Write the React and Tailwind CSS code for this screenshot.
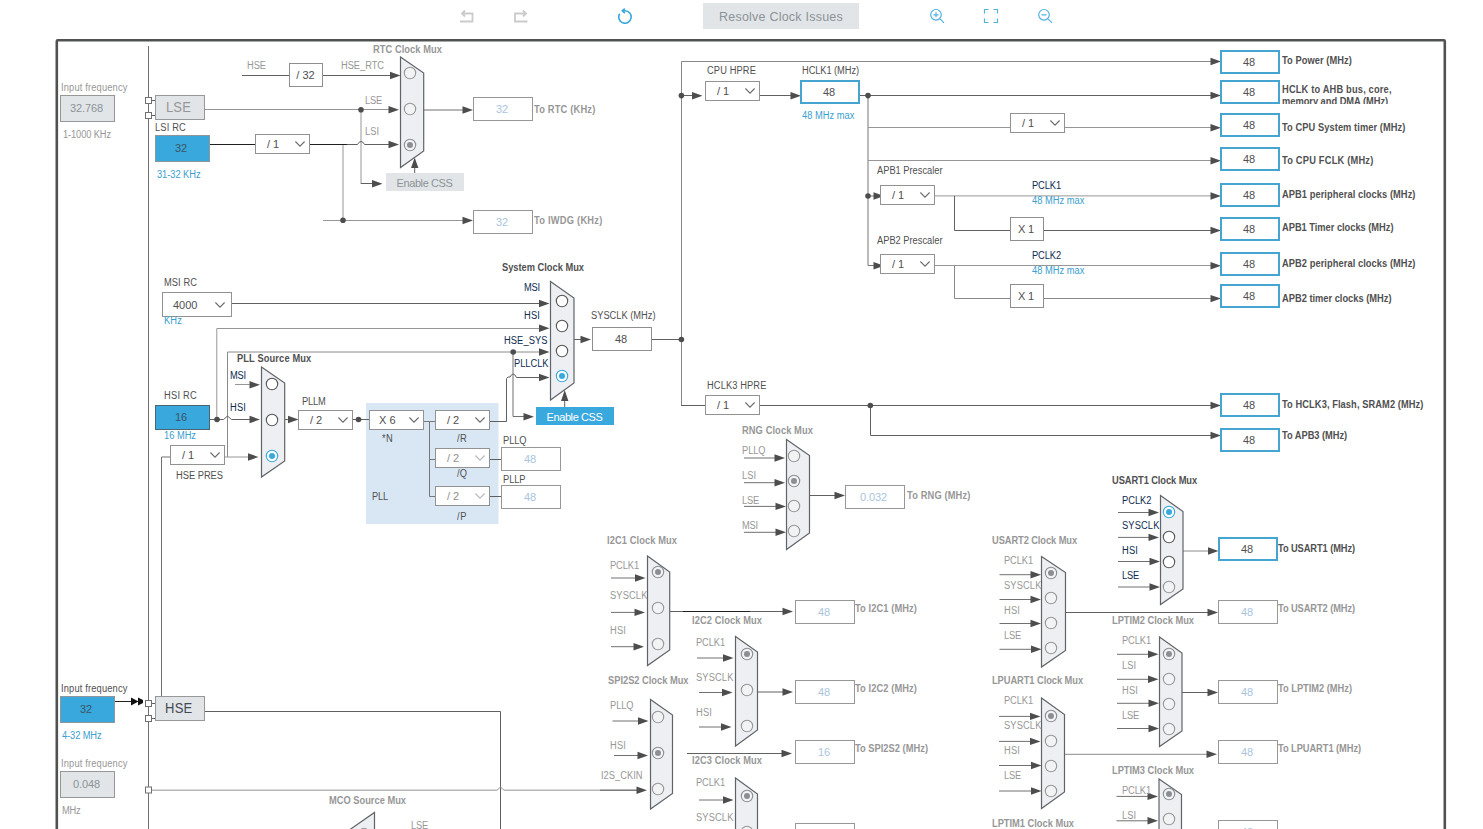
import React from "react";

const TOP = 32;
const FONT = '"Liberation Sans", Arial, sans-serif';
// Labels are set slightly condensed; the tracking below allows for it.
const CONDENSE = 0.93;

const pen = document.createElement("canvas").getContext("2d");
// Letter spacing that makes a label exactly `width` pixels wide.
function tracking(text, size, bold, width) {
  pen.font = `${bold ? "bold " : ""}${size}px ${FONT}`;
  return (width - pen.measureText(text).width) / text.length;
}

const TONES = {
  dark: "text-[#505050]",
  gray: "text-[#979797]",
  navy: "text-[#0d2c52]",
  blue: "text-[#3aa0cf]",
  slate: "text-[#454b54]",
};

function Label({ text, x, y, w, tone = "dark", bold, size = 10 }) {
  return (
    <span
      className={`absolute h-4 origin-left scale-x-[0.93] whitespace-pre leading-4 ${bold ? "font-bold" : ""} ${TONES[tone]}`}
      style={{ left: x, top: Math.round(y - 8 - TOP), fontSize: size, letterSpacing: tracking(text, size, bold, w / CONDENSE) }}
    >
      {text}
    </span>
  );
}

const BOX = {
  plain: "border border-[#8e8e8e] bg-white text-[#505050]",
  active: "border-2 border-[#45a5d0] bg-white text-[#505050]",
  off: "border border-[#979797] bg-white text-[#a9c4dd]",
  input: "border border-[#8f9598] bg-[#39a8dd] text-[#3b5563]",
  inputDark: "border border-[#4a6470] bg-[#39a8dd] text-[#3b5563]",
  muted: "border border-[#979797] bg-[#e1e5e8] text-[#8d9397]",
};

function Box({ x, y, w = 60, h = 24, text, kind = "plain", pr = 5, tw }) {
  const width = tw || text.length * 6;
  return (
    <div
      className={`absolute flex items-center justify-center whitespace-pre text-[11px] ${BOX[kind]}`}
      style={{ left: x, top: y - TOP, width: w, height: h, paddingRight: pr }}
    >
      <span style={{ letterSpacing: tracking(text, 11, false, width) }}>{text}</span>
    </div>
  );
}

function Combo({ x, y, w = 55, h = 20, text, off, pl = 11 }) {
  return (
    <div
      className={`absolute flex items-center justify-between whitespace-pre border border-[#929292] bg-white pr-1 text-[11px] ${off ? "text-[#8f8f8f]" : "text-[#505050]"}`}
      style={{ left: x, top: y - TOP, width: w, height: h, paddingLeft: pl }}
    >
      <span className="pt-px">{text}</span>
      <svg className={`h-[6px] w-[10px] ${h > 20 ? "mr-[2px]" : ""}`} viewBox="0 0 10 6" fill="none" stroke={off ? "#b5b9bd" : "#6a6a6a"} strokeWidth="1.1">
        <path d="M.4 .5L5 5.1L9.6 .5" />
      </svg>
    </div>
  );
}

const G = "#969696";
const D = "#606060";
const K = "#1f1f1f";

// [path, colour]
const WIRES = [
  ["M148.500 46V829", "#707070"],
  ["M151 100.500H155M151 115.500H155M151 703.500H155M151 718.500H155", D],
  ["M242 75.500H289M323 75.500H392", D],
  ["M205 109.500H392M361 109.500V184M343 144V220M323 220.500H465", G],
  ["M361 183.500H374", D],
  ["M210 144.500H255M310 144.500H347", K],
  ["M347 144.500H357.500Q359 141.500 361 141.500Q363 141.500 364.500 144.500H392", D],
  ["M424 110H465", "#707070"],
  ["M414.700 173V166", D],
  ["M232 303.500H541", D],
  ["M216.800 419V328.500H541", G],
  ["M227.500 457V352H541", "#8a8a8a"],
  ["M235 384.500H252", G],
  ["M210 419.500H223.500L227.500 416L231.500 419.500H252", D],
  ["M225 457H250", G],
  ["M170 457H161.500V696", "#707070"],
  ["M285 419.500H291M353 419.500H369", D],
  ["M424 421.500H435M429.500 421.500V496.500H435M429.500 459.500H435", "#777"],
  ["M490 421.500H506.500V378.500L508 377H510Q511.500 374 513 374Q515 374 516.500 377.500H541", D],
  ["M490 459.500H501M490 496.500H501", D],
  ["M513 352V416.500H526", "#707070"],
  ["M574 339.500H583M652 339.500H681", D],
  ["M564.700 407V400", D],
  ["M681.500 405V61.500H1213", "#888"],
  ["M681 95.500H693M760 95.500H792M860 95.500H1213", D],
  ["M868 95.500V265.500H874M868 196H874", "#777"],
  ["M868 127.500H1010M1065 127.500H1213M868 160.500H1213", G],
  ["M935 195.900H1213M935 265.500H1213", G],
  ["M954.500 196V230.500H1010M1044 230.500H1213", D],
  ["M954.500 265.500V298.500H1010M1044 298.500H1213", "#8a8a8a"],
  ["M681 405.500H705M760 405.500H1213", D],
  ["M870.500 405.500V435.500H1213", D],
  ["M810 495.500H837M1065 612.500H1210M1182 692.500H1210", D],
  ["M1183 551H1210M1065 754.300H1209", "#8a8a8a"],
  ["M670 611.500H785M758 692H785", D],
  ["M683 611.500H750", K],
  ["M687 753.500H784", D],
  ["M205 711.500H500.500V829", D],
  ["M151 790.200H497L500.500 787L504 790.200H640", G],
  ["M600 790.200H640", D],
  ["M115 701.500H131", K],
];

// Arrow heads pointing right: [tip x, y]
const HEADS = [
  [400.500, 75.500], [399, 109.700], [382.500, 183.800], [399, 144.500], [473, 220.500], [473, 110],
  [549.500, 303.500], [549.500, 328.300], [549.500, 352], [549.500, 377.500], [260, 384.800], [260, 419.500],
  [258.500, 457], [298.500, 419.500], [534, 416.700], [591, 339.500],
  [1221, 61.500], [702.500, 95.700], [801, 95.700], [1221, 95.500], [1221, 127.800], [1221, 160.700],
  [1221, 196], [1221, 230.500], [1221, 265.800], [1221, 298.600], [1221, 405.500], [1221, 435.500],
  [884, 196], [884, 265.800],
  [845, 495.500], [1218.500, 551], [1218, 612.500], [1218, 692.500], [1217, 754.300],
  [793, 611.500], [793, 692], [792, 753.500], [647, 790.200],
];

const DOTS = [
  [361, 109.800], [343, 220.200], [217, 419.500], [358.500, 419.500], [513.200, 352], [681.400, 339.500],
  [681.400, 95.600], [868, 95.600], [868, 196], [870.300, 405.500],
];

const PORTS = [100.500, 115.500, 703.500, 718.500, 790];

// Selectors: geometry, radio centre x, radios [y, state], inputs [from x, tip x, y]
const MUXES = [
  { l: 400.500, r: 423.700, t: 57, rt: 73, rb: 151, b: 167.500, cx: 410, radios: [[73, "off"], [109, "off"], [145, "offOn"]], ins: [] },
  { l: 550.500, r: 574, t: 281.500, rt: 298, rb: 383, b: 400, cx: 562, radios: [[301, "free"], [326, "free"], [351, "free"], [376, "on"]], ins: [] },
  { l: 261.500, r: 284.700, t: 367, rt: 383, rb: 461, b: 477, cx: 272, radios: [[384, "free"], [420, "free"], [456, "on"]], ins: [] },
  { l: 786.500, r: 809.500, t: 439.500, rt: 455.500, rb: 533, b: 549.500, cx: 794, radios: [[456, "off"], [481, "offOn"], [506, "off"], [531, "off"]], ins: [[744, 785, 458], [744, 785, 482.700], [744, 786, 506.400], [744, 786, 532.300]] },
  { l: 1160.500, r: 1183, t: 495.500, rt: 511.500, rb: 589, b: 604.500, cx: 1169, radios: [[512, "on"], [537, "free"], [562, "free"], [587, "off"]], ins: [[1118, 1159, 512.500], [1118, 1159, 537.400], [1118, 1160, 561.500], [1118, 1160, 587]] },
  { l: 1041.500, r: 1065.500, t: 556.500, rt: 572.500, rb: 650.500, b: 667, cx: 1051, radios: [[573, "offOn"], [598, "off"], [623, "off"], [648, "off"]], ins: [[999.500, 1041, 574.700], [999.500, 1041, 599.500], [999.500, 1041, 623.500], [999.500, 1041.500, 649.300]] },
  { l: 1159.500, r: 1182, t: 637, rt: 653, rb: 731, b: 746.500, cx: 1169, radios: [[654, "offOn"], [679, "off"], [704, "off"], [729, "off"]], ins: [[1117, 1158.500, 654.300], [1117, 1158.500, 679.300], [1117, 1159, 703.300], [1117, 1159, 728.500]] },
  { l: 1041.500, r: 1064.500, t: 698, rt: 714.500, rb: 792, b: 808.500, cx: 1051, radios: [[716, "offOn"], [741, "off"], [766, "off"], [791, "off"]], ins: [[999, 1040.500, 716.400], [999, 1040.500, 741.400], [999, 1041.500, 765.500], [999, 1041.500, 791]] },
  { l: 1159, r: 1181.500, t: 779, rt: 794.500, rb: 873, b: 889, cx: 1169, radios: [[794, "offOn"], [819, "off"]], ins: [[1116.500, 1158, 796.400], [1116.500, 1158, 820.800]] },
  { l: 647.500, r: 669.700, t: 556, rt: 572, rb: 650, b: 665.500, cx: 658, radios: [[572, "offOn"], [608, "off"], [644, "off"]], ins: [[611, 645.500, 578], [611, 645, 612.400], [611, 644, 646.700]] },
  { l: 735.500, r: 757.500, t: 636.500, rt: 652, rb: 730, b: 746, cx: 747, radios: [[654, "offOn"], [690, "off"], [726, "off"]], ins: [[697, 733.500, 658], [699, 732.500, 692.500], [699, 731.500, 727]] },
  { l: 650.500, r: 672.500, t: 699.500, rt: 715, rb: 793.500, b: 809, cx: 658, radios: [[717, "off"], [753, "offOn"], [789, "off"]], ins: [[612.500, 648.500, 721], [614, 648, 755.500]] },
  { l: 735.500, r: 757.500, t: 778, rt: 794, rb: 872, b: 888, cx: 747, radios: [[796, "offOn"], [832, "off"]], ins: [[699, 733.500, 800]] },
];

function Head({ x, y }) {
  return <path d={`M${x - 10.5} ${y - 3.7}L${x} ${y}L${x - 10.5} ${y + 3.7}Z`} fill="#4d4d4d" />;
}

function Radio({ x, y, state }) {
  const stroke = { off: "#979797", offOn: "#8b8f92", free: "#555", on: "#39a8dd" }[state];
  return (
    <g>
      <circle cx={x} cy={y} r="5.7" fill={state === "free" || state === "on" ? "#fff" : "#f1f3f5"} stroke={stroke} strokeWidth="1.1" />
      {(state === "on" || state === "offOn") && <circle cx={x} cy={y} r="3" fill={stroke} />}
    </g>
  );
}

function Mux({ l, r, t, rt, rb, b, cx, radios, ins }) {
  return (
    <g>
      {ins.map(([from, tip, y]) => (
        <g key={y}>
          <path d={`M${from} ${y}H${tip - 9}`} stroke="#707070" />
          <Head x={tip} y={y} />
        </g>
      ))}
      <path d={`M${l} ${t}L${r} ${rt}V${rb}L${l} ${b}Z`} fill="#edeff2" stroke="#606468" strokeWidth="1.2" />
      {radios.map(([y, state]) => (
        <Radio key={y} x={cx} y={y} state={state} />
      ))}
    </g>
  );
}

// [text, x, y, width, tone, bold]
const LABELS = [
  ["Input frequency", 60.500, 88, 66.500, "gray"], ["1-1000 KHz", 62.500, 134.700, 48, "gray"],
  ["LSI RC", 155, 128, 31, "dark"], ["31-32 KHz", 157, 174.700, 43.500, "blue"],
  ["HSE", 247, 65.700, 19, "gray"], ["HSE_RTC", 341, 65.700, 43, "gray"],
  ["RTC Clock Mux", 373, 49.700, 69, "gray", 1],
  ["LSE", 365, 100.700, 17, "gray"], ["LSI", 365, 131.700, 14, "gray"],
  ["To RTC (KHz)", 534, 109.700, 61.500, "gray", 1], ["To IWDG (KHz)", 534, 220.700, 68.500, "gray", 1],
  ["MSI RC", 164, 282.700, 33, "dark"], ["KHz", 164, 321, 18, "blue"],
  ["HSI RC", 164, 395.700, 33, "dark"], ["16 MHz", 164, 435.700, 32, "blue"], ["HSE PRES", 176, 475.700, 47, "dark"],
  ["PLL Source Mux", 237, 358.700, 74.500, "dark", 1], ["MSI", 230, 375.700, 16, "navy"], ["HSI", 230, 407.700, 16, "navy"],
  ["PLLM", 302, 401.700, 23.500, "dark"],
  ["System Clock Mux", 501.500, 267.700, 82, "dark", 1],
  ["MSI", 524, 287.700, 16, "navy"], ["HSI", 524, 315.700, 16, "navy"], ["HSE_SYS", 504, 340.700, 43.500, "navy"], ["PLLCLK", 514, 363.700, 34.500, "navy"],
  ["SYSCLK (MHz)", 591, 315.700, 64.500, "dark"],
  ["*N", 382, 439, 11, "dark"], ["/R", 457, 439, 10, "dark"], ["/Q", 457, 474, 10, "dark"], ["/P", 457, 516.700, 10, "dark"], ["PLL", 372, 496.700, 16, "dark"],
  ["PLLQ", 503, 440.700, 23.500, "dark"], ["PLLP", 503, 479.700, 22.500, "dark"],
  ["CPU HPRE", 707, 70.700, 49, "dark"], ["HCLK1 (MHz)", 802, 70.700, 57, "dark"], ["48 MHz max", 802, 115.700, 52.500, "blue"],
  ["APB1 Prescaler", 877, 170.700, 65.500, "dark"], ["APB2 Prescaler", 877, 240.700, 65.500, "dark"],
  ["PCLK1", 1032, 185.700, 29, "navy"], ["48 MHz max", 1032, 200.700, 52.500, "blue"],
  ["PCLK2", 1032, 255.700, 29, "navy"], ["48 MHz max", 1032, 270.700, 52.500, "blue"],
  ["To Power (MHz)", 1282, 60.700, 70, "dark", 1], ["To CPU System timer (MHz)", 1282, 127.700, 123.500, "dark", 1],
  ["To CPU FCLK (MHz)", 1282, 160.700, 91.500, "dark", 1], ["APB1 peripheral clocks (MHz)", 1282, 194.700, 133.500, "dark", 1],
  ["APB1 Timer clocks (MHz)", 1282, 227.700, 111.500, "dark", 1], ["APB2 peripheral clocks (MHz)", 1282, 263.700, 133.500, "dark", 1],
  ["APB2 timer clocks (MHz)", 1282, 298.700, 109.500, "dark", 1],
  ["HCLK3 HPRE", 707, 385.700, 59.500, "dark"],
  ["To HCLK3, Flash, SRAM2 (MHz)", 1282, 404.700, 141.500, "dark", 1], ["To APB3 (MHz)", 1282, 435.700, 65.500, "dark", 1],
  ["RNG Clock Mux", 742, 430.700, 71, "gray", 1], ["PLLQ", 742, 450.700, 23.500, "gray"], ["LSI", 742, 475.700, 14, "gray"], ["LSE", 742, 500.700, 17, "gray"], ["MSI", 742, 525.700, 16, "gray"],
  ["To RNG (MHz)", 907, 495.700, 63.500, "gray", 1],
  ["USART1 Clock Mux", 1112, 480.700, 85, "dark", 1], ["PCLK2", 1122, 500.700, 29.500, "navy"], ["SYSCLK", 1122, 525.700, 37.500, "navy"], ["HSI", 1122, 550.700, 16, "navy"], ["LSE", 1122, 575.700, 17, "navy"],
  ["To USART1 (MHz)", 1277.500, 548.700, 77, "dark", 1],
  ["USART2 Clock Mux", 992, 540.700, 85, "gray", 1], ["PCLK1", 1004, 560.700, 29, "gray"], ["SYSCLK", 1004, 585.700, 37.500, "gray"], ["HSI", 1004, 610.700, 16, "gray"], ["LSE", 1004, 635.700, 17, "gray"],
  ["To USART2 (MHz)", 1277.500, 608.700, 77, "gray", 1],
  ["LPTIM2 Clock Mux", 1112, 620.700, 82, "gray", 1], ["PCLK1", 1122, 640.700, 29, "gray"], ["LSI", 1122, 665.700, 14, "gray"], ["HSI", 1122, 690.700, 16, "gray"], ["LSE", 1122, 715.700, 17, "gray"],
  ["To LPTIM2 (MHz)", 1277.500, 688.700, 74, "gray", 1],
  ["LPUART1 Clock Mux", 992, 680.700, 91, "gray", 1], ["PCLK1", 1004, 700.700, 29, "gray"], ["SYSCLK", 1004, 725.700, 37.500, "gray"], ["HSI", 1004, 750.700, 16, "gray"], ["LSE", 1004, 775.700, 17, "gray"],
  ["To LPUART1 (MHz)", 1277.500, 748.700, 83, "gray", 1],
  ["LPTIM3 Clock Mux", 1112, 770.700, 82, "gray", 1], ["PCLK1", 1122, 790.700, 29, "gray"], ["LSI", 1122, 815.700, 14, "gray"],
  ["LPTIM1 Clock Mux", 992, 823.700, 82, "gray", 1],
  ["I2C1 Clock Mux", 607, 540.700, 70, "gray", 1], ["PCLK1", 610, 565.700, 29, "gray"], ["SYSCLK", 610, 595.700, 37.500, "gray"], ["HSI", 610, 630.700, 16, "gray"],
  ["To I2C1 (MHz)", 855, 608.700, 62, "gray", 1],
  ["I2C2 Clock Mux", 692, 620.700, 70, "gray", 1], ["PCLK1", 696, 642.700, 29, "gray"], ["SYSCLK", 696, 677.700, 37.500, "gray"], ["HSI", 696, 712.700, 16, "gray"],
  ["To I2C2 (MHz)", 855, 688.700, 62, "gray", 1],
  ["SPI2S2 Clock Mux", 607.500, 680.700, 80.500, "gray", 1], ["PLLQ", 610, 705.700, 23.500, "gray"], ["HSI", 610, 745.700, 16, "gray"], ["I2S_CKIN", 600.500, 775.700, 41.500, "gray"],
  ["To SPI2S2 (MHz)", 855, 748.700, 73, "gray", 1],
  ["I2C3 Clock Mux", 692, 760.700, 70, "gray", 1], ["PCLK1", 696, 782.700, 29, "gray"], ["SYSCLK", 696, 817.700, 37.500, "gray"],
  ["Input frequency", 60.500, 688.700, 66.500, "dark"], ["4-32 MHz", 62, 735.700, 39.500, "blue"],
  ["Input frequency", 60.500, 763.700, 66.500, "gray"], ["MHz", 62, 810.700, 18.500, "gray"],
  ["MCO Source Mux", 329, 800.700, 77, "gray", 1], ["LSE", 411, 825.700, 17, "gray"],
];

function CssButton({ x, y, on }) {
  return (
    <div
      className={`absolute flex h-[18px] w-[78px] items-center justify-center pr-px text-[11px] ${on ? "bg-[#39a8dd] text-white" : "bg-[#e1e5e8] text-[#8d9397]"}`}
      style={{ left: x, top: y - TOP }}
    >
      <span className="whitespace-pre pt-[2px]" style={{ letterSpacing: tracking("Enable CSS", 11, false, 56) }}>Enable CSS</span>
    </div>
  );
}

function Toolbar() {
  const icon = "h-4 w-4 shrink-0";
  return (
    <header className="flex h-8 items-center pl-[459px]">
      <svg className={icon} viewBox="0 0 16 16" fill="none" stroke="#cbcbcb" strokeWidth="1.8">
        <path d="M1 13.500H13.500V5.500H3M6 2.500L3 5.500L6 8.500" />
      </svg>
      <svg className={`${icon} ml-[38px]`} viewBox="0 0 16 16" fill="none" stroke="#cbcbcb" strokeWidth="1.8">
        <path d="M14.500 13.500H2V5.500H13M10 2.500L13 5.500L10 8.500" />
      </svg>
      <svg className={`${icon} ml-[88px]`} viewBox="0 0 16 16" fill="none" stroke="#39a8dd" strokeWidth="1.6">
        <path d="M2.700 5.700A6.200 6.200 0 1 0 8 2.800H5.500M7.800 .6L5.300 2.800L7.800 5.200" />
      </svg>
      <button className="ml-[70px] h-[26px] w-[156px] shrink-0 bg-[#e1e5e8] pt-px text-[12.5px] leading-[24px] text-[#8d9397]">
        <span className="whitespace-pre" style={{ letterSpacing: tracking("Resolve Clock Issues", 12.5, false, 124) }}>Resolve Clock Issues</span>
      </button>
      <svg className={`${icon} ml-[70px]`} viewBox="0 0 16 16" fill="none" stroke="#52b2e0" strokeWidth="1.200">
        <path d="M7 1.500A5.300 5.300 0 1 0 7 12.100A5.300 5.300 0 1 0 7 1.500ZM10.800 10.600L15 14.800M4.500 6.800H9.500M7 4.300V9.300" />
      </svg>
      <svg className={`${icon} ml-[38px]`} viewBox="0 0 16 16" fill="none" stroke="#52b2e0" strokeWidth="1.200">
        <path d="M1.500 5.500V1.500H5.500M10.500 1.500H14.500V5.500M14.500 10.500V14.500H10.500M5.500 14.500H1.500V10.500" />
      </svg>
      <svg className={`${icon} ml-[38px]`} viewBox="0 0 16 16" fill="none" stroke="#52b2e0" strokeWidth="1.200">
        <path d="M7 1.500A5.300 5.300 0 1 0 7 12.100A5.300 5.300 0 1 0 7 1.500ZM10.800 10.600L15 14.800M4.500 6.800H9.500" />
      </svg>
    </header>
  );
}

// [x, y, text, kind]
const VALUES = [
  ...[50, 80, 113, 147, 183, 217, 252, 284, 393, 428].map((y) => [1220, y, "48", "active"]),
  [473, 97, "32", "off"], [473, 210, "32", "off"], [592, 327, "48", "plain"],
  [501, 447, "48", "off"], [501, 485, "48", "off"], [800, 80, "48", "active"],
  [1218, 537, "48", "active"], [1218, 600, "48", "off"], [1218, 680, "48", "off"], [1218, 740, "48", "off"], [1218, 820, "48", "off"],
  [795, 600, "48", "off"], [795, 680, "48", "off"], [795, 740, "16", "off"], [795, 823, "48", "off"],
];

// [x, y, text]
const DIVIDERS = [
  [255, 134, "/ 1"], [170, 445, "/ 1"], [298, 410, "/ 2"], [435, 410, "/ 2"], [705, 81, "/ 1"],
  [1010, 113, "/ 1"], [880, 185, "/ 1"], [880, 254, "/ 1"], [705, 395, "/ 1"],
];

export default function App() {
  return (
    <div className="flex h-[829px] w-[1483px] flex-col overflow-hidden bg-white font-['Liberation_Sans',Arial,sans-serif]">
      <Toolbar />
      <main className="relative flex-1 overflow-hidden">
        <svg className="absolute left-0 top-0" width="1483" height="797" viewBox="0 32 1483 797" fill="none">
          <rect x="56.800" y="40.300" width="1388" height="850" rx="1" stroke="#505252" strokeWidth="2.600" />
          <rect x="366" y="403" width="132.500" height="121" fill="#d9e7f4" />
          {WIRES.map(([d, color]) => (
            <path key={d} d={d} stroke={color} />
          ))}
          {HEADS.map(([x, y]) => (
            <Head key={`${x}-${y}`} x={x} y={y} />
          ))}
          {DOTS.map(([x, y]) => (
            <circle key={`${x}-${y}`} cx={x} cy={y} r="2.800" fill="#4d4d4d" />
          ))}
          {PORTS.map((y) => (
            <rect key={y} x="145.500" y={y - 3} width="6" height="6" fill="#fff" stroke="#707070" />
          ))}
          <path d="M131 697.500L138.500 701.500L131 705.500ZM138 697.500L143 700V703L138 705.500Z" fill="#111" />
          {MUXES.map((m) => (
            <Mux key={`${m.l}-${m.t}`} {...m} />
          ))}
          <path d="M374.500 835V812.500L345 833" fill="#edeff2" stroke="#606468" strokeWidth="1.200" />
          <circle cx="364" cy="834" r="5.700" stroke="#979797" />
          <path d="M411 168L414.700 157.500L418.400 168ZM561 401L564.700 390L568.400 401Z" fill="#4d4d4d" />
        </svg>

        <Box x={60} y={95} w={55} h={27} text="32.768" kind="muted" pr={2} tw={33} />
        <Box x={155} y={135} w={55} h={27} text="32" kind="input" pr={3} />
        <Box x={60} y={696} w={55} h={27} text="32" kind="input" pr={3} />
        <Box x={60} y={771} w={55} h={27} text="0.048" kind="muted" pr={2} tw={27} />
        <Box x={155} y={405} w={55} h={25} text="16" kind="inputDark" pr={3} />
        <Box x={289} y={63} w={34} text="/ 32" pr={1} tw={18.5} />
        <Box x={1010} y={217} w={34} text="X 1" pr={2} tw={16} />
        <Box x={1010} y={284} w={34} text="X 1" pr={2} tw={16} />
        <Box x={845} y={485} text="0.032" kind="off" pr={3} tw={27} />
        {VALUES.map(([x, y, text, kind]) => (
          <Box key={`${x}-${y}`} x={x} y={y} text={text} kind={kind} pr={2} />
        ))}

        {DIVIDERS.map(([x, y, text]) => (
          <Combo key={`${x}-${y}`} x={x} y={y} text={text} />
        ))}
        <Combo x={162} y={292} w={70} h={25} text="4000" pl={10} />
        <Combo x={369} y={410} text="X 6" pl={9} />
        <Combo x={435} y={448} text="/ 2" off />
        <Combo x={435} y={486} text="/ 2" off />

        <div className="absolute left-[155px] top-[63px] h-[25px] w-[50px] border border-[#979797] bg-[#e1e5e8]" />
        <div className="absolute left-[155px] top-[664px] h-[25px] w-[50px] border border-[#979797] bg-[#e1e5e8]" />
        <Label text="LSE" x={166} y={107} w={25} size={14} tone="gray" />
        <Label text="HSE" x={164.5} y={708} w={27.5} size={14} tone="slate" />
        <CssButton x={386} y={173} />
        <CssButton x={536} y={407} on />

        {LABELS.map(([text, x, y, w, tone, bold]) => (
          <Label key={`${text}-${x}-${y}`} text={text} x={x} y={y} w={w} tone={tone} bold={bold} />
        ))}
        <p className="absolute left-[1282px] top-[51px] h-[21px] w-[130px] origin-left scale-x-[0.93] overflow-hidden whitespace-pre pt-px text-[10px] font-bold leading-[12px] text-[#505050]">
          <span className="block" style={{ letterSpacing: tracking("HCLK to AHB bus, core,", 10, true, 110 / CONDENSE) }}>HCLK to AHB bus, core,</span>
          <span className="block" style={{ letterSpacing: tracking("memory and DMA (MHz)", 10, true, 106.5 / CONDENSE) }}>memory and DMA (MHz)</span>
        </p>
      </main>
    </div>
  );
}
